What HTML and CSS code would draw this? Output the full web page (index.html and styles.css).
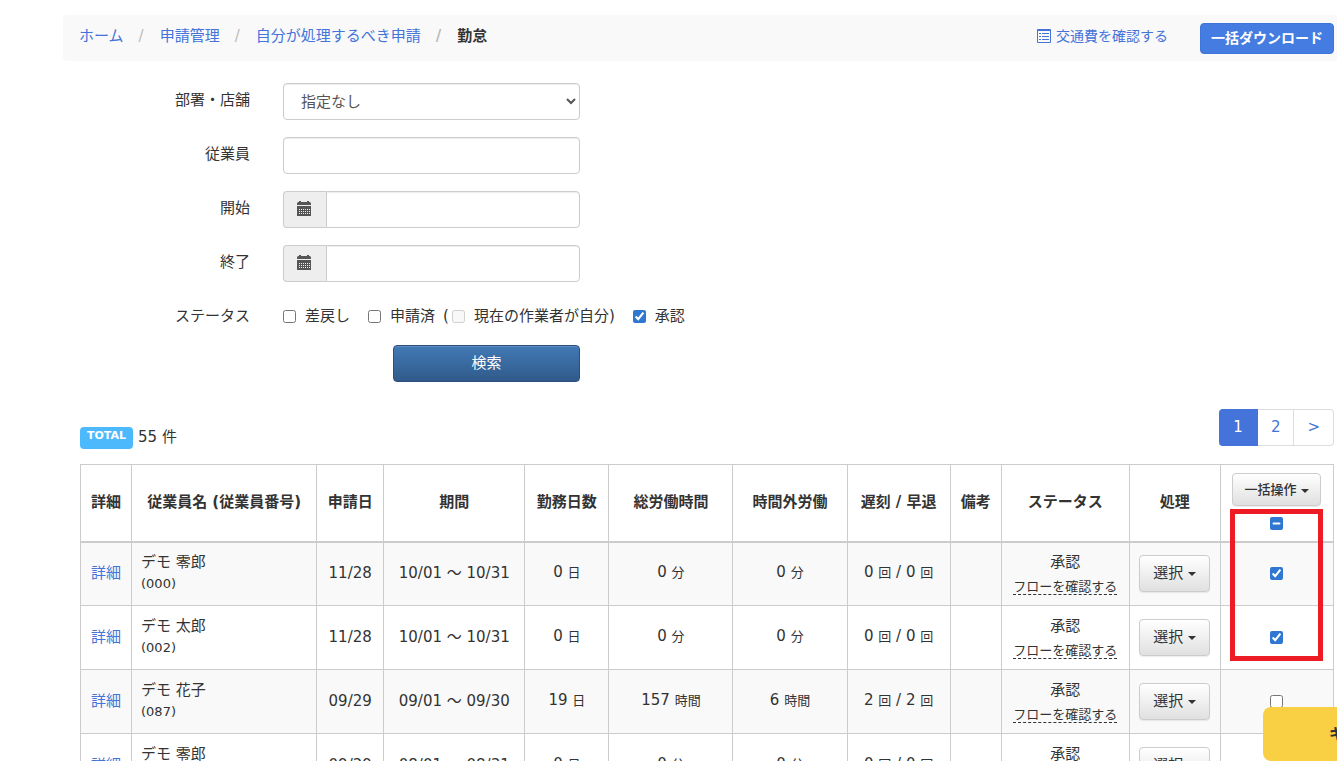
FILE: index.html
```html
<!DOCTYPE html>
<html lang="ja">
<head>
    <meta charset="UTF-8">
    <meta name="viewport" content="width=device-width, initial-scale=1.0">
    <title>勤怠</title>
    <link rel="stylesheet" href="styles.css">
</head>
<body>
    <div class="page">
        <header class="topbar">
            <nav>
                <ol class="breadcrumb">
                    <li><a href="#">ホーム</a></li>
                    <li><a href="#">申請管理</a></li>
                    <li><a href="#">自分が処理するべき申請</a></li>
                    <li class="current">勤怠</li>
                </ol>
            </nav>
            <div class="topbar-actions">
                <a class="expense-link" href="#">
                    <svg width="14" height="14" viewBox="0 0 14 14" fill="none" stroke="currentColor">
                        <path d="M0.5 0.5h13v13h-13z"/>
                        <path d="M0 1.5h14"/>
                        <path d="M2 4.5h2M5 4.5h7M2 7.5h2M5 7.5h7M2 10.5h2M5 10.5h7"/>
                    </svg>
                    交通費を確認する
                </a>
                <button type="button" class="btn-download">一括ダウンロード</button>
            </div>
        </header>

        <main class="content">
            <form id="searchForm">
                <div class="form-row">
                    <label for="section">部署・店舗</label>
                    <select id="section" name="section" class="form-control">
                        <option value="">指定なし</option>
                    </select>
                </div>
                <div class="form-row">
                    <label for="employee">従業員</label>
                    <input type="text" id="employee" name="employee" class="form-control">
                </div>
                <div class="form-row">
                    <label for="start">開始</label>
                    <div class="input-group">
                        <span class="addon">
                            <svg width="14" height="15" viewBox="0 0 14 15">
                                <path fill="#555" d="M0 4V2.5Q0 1 1.5 1H2V0h2v1h6V0h2v1h.5Q14 1 14 2.5V4zM0 5h14v10H0z"/>
                                <path stroke="#eee" stroke-dasharray="1 1" d="M2 8.5h11M2 10.5h11M2 12.5h11"/>
                            </svg>
                        </span>
                        <input type="text" id="start" name="start" class="form-control">
                    </div>
                </div>
                <div class="form-row">
                    <label for="end">終了</label>
                    <div class="input-group">
                        <span class="addon">
                            <svg width="14" height="15" viewBox="0 0 14 15">
                                <path fill="#555" d="M0 4V2.5Q0 1 1.5 1H2V0h2v1h6V0h2v1h.5Q14 1 14 2.5V4zM0 5h14v10H0z"/>
                                <path stroke="#eee" stroke-dasharray="1 1" d="M2 8.5h11M2 10.5h11M2 12.5h11"/>
                            </svg>
                        </span>
                        <input type="text" id="end" name="end" class="form-control">
                    </div>
                </div>
                <div class="form-row status-row">
                    <span class="row-label">ステータス</span>
                    <div class="checks">
                        <label><input type="checkbox" name="returned">差戻し</label>
                        <div class="check-pair">
                            <label><input type="checkbox" name="applied">申請済</label>
                            <span class="paren">(</span><label><input type="checkbox" name="mine" disabled>現在の作業者が自分)</label>
                        </div>
                        <label><input type="checkbox" name="approved" checked>承認</label>
                    </div>
                </div>
                <div class="form-row submit-row">
                    <button type="submit" class="btn-search">検索</button>
                </div>
            </form>

            <div class="list-head">
                <div class="total"><span class="badge">TOTAL</span>55 件</div>
                <nav class="pagination">
                    <a class="active" href="#">1</a>
                    <a href="#">2</a>
                    <a href="#">&gt;</a>
                </nav>
            </div>

            <div class="table-wrap">
                <table>
                    <colgroup>
                        <col class="w-detail">
                        <col class="w-name">
                        <col class="w-date">
                        <col class="w-period">
                        <col class="w-days">
                        <col class="w-total">
                        <col class="w-over">
                        <col class="w-late">
                        <col class="w-note">
                        <col class="w-status">
                        <col class="w-action">
                        <col class="w-bulk">
                    </colgroup>
                    <thead>
                        <tr>
                            <th>詳細</th>
                            <th>従業員名 (従業員番号)</th>
                            <th>申請日</th>
                            <th>期間</th>
                            <th>勤務日数</th>
                            <th>総労働時間</th>
                            <th>時間外労働</th>
                            <th>遅刻 / 早退</th>
                            <th>備考</th>
                            <th>ステータス</th>
                            <th>処理</th>
                            <th class="bulk">
                                <button type="button" class="btn-default btn-small">一括操作<span class="caret"></span></button>
                                <input type="checkbox" id="checkAll" aria-label="すべて選択">
                            </th>
                        </tr>
                    </thead>
                    <tbody>
                        <tr>
                            <td><a href="#">詳細</a></td>
                            <td class="name">デモ 零郎<small>(000)</small></td>
                            <td>11/28</td>
                            <td>10/01 ～ 10/31</td>
                            <td>0 <small>日</small></td>
                            <td>0 <small>分</small></td>
                            <td>0 <small>分</small></td>
                            <td>0 <small>回</small> / 0 <small>回</small></td>
                            <td></td>
                            <td class="status">承認<a href="#">フローを確認する</a></td>
                            <td class="action"><button type="button" class="btn-default">選択<span class="caret"></span></button></td>
                            <td><input type="checkbox" aria-label="デモ 零郎" checked></td>
                        </tr>
                        <tr>
                            <td><a href="#">詳細</a></td>
                            <td class="name">デモ 太郎<small>(002)</small></td>
                            <td>11/28</td>
                            <td>10/01 ～ 10/31</td>
                            <td>0 <small>日</small></td>
                            <td>0 <small>分</small></td>
                            <td>0 <small>分</small></td>
                            <td>0 <small>回</small> / 0 <small>回</small></td>
                            <td></td>
                            <td class="status">承認<a href="#">フローを確認する</a></td>
                            <td class="action"><button type="button" class="btn-default">選択<span class="caret"></span></button></td>
                            <td><input type="checkbox" aria-label="デモ 太郎" checked></td>
                        </tr>
                        <tr>
                            <td><a href="#">詳細</a></td>
                            <td class="name">デモ 花子<small>(087)</small></td>
                            <td>09/29</td>
                            <td>09/01 ～ 09/30</td>
                            <td>19 <small>日</small></td>
                            <td>157 <small>時間</small></td>
                            <td>6 <small>時間</small></td>
                            <td>2 <small>回</small> / 2 <small>回</small></td>
                            <td></td>
                            <td class="status">承認<a href="#">フローを確認する</a></td>
                            <td class="action"><button type="button" class="btn-default">選択<span class="caret"></span></button></td>
                            <td><input type="checkbox" aria-label="デモ 花子"></td>
                        </tr>
                        <tr>
                            <td><a href="#">詳細</a></td>
                            <td class="name">デモ 零郎<small>(000)</small></td>
                            <td>09/29</td>
                            <td>08/01 ～ 08/31</td>
                            <td>0 <small>日</small></td>
                            <td>0 <small>分</small></td>
                            <td>0 <small>分</small></td>
                            <td>0 <small>回</small> / 0 <small>回</small></td>
                            <td></td>
                            <td class="status">承認<a href="#">フローを確認する</a></td>
                            <td class="action"><button type="button" class="btn-default">選択<span class="caret"></span></button></td>
                            <td><input type="checkbox" aria-label="デモ 零郎 8月"></td>
                        </tr>
                    </tbody>
                </table>
                <div class="highlight"></div>
            </div>
        </main>
    </div>

    <button type="button" class="float-button">キ</button>

    <script>
        // Header checkbox is "partly selected" while only some rows are ticked
        const checkAll = document.getElementById('checkAll');
        const rows = document.querySelectorAll('tbody input[type="checkbox"]');

        function updateCheckAll() {
            const count = Array.from(rows).filter(row => row.checked).length;
            checkAll.checked = count === rows.length;
            checkAll.indeterminate = count > 0 && count < rows.length;
        }

        checkAll.addEventListener('change', function() {
            rows.forEach(row => {
                row.checked = checkAll.checked;
            });
        });
        rows.forEach(row => row.addEventListener('change', updateCheckAll));
        updateCheckAll();
    </script>
</body>
</html>
```
FILE: styles.css
```css
* {
    box-sizing: border-box;
}
html {
    overflow: hidden;
}
body {
    margin: 0;
    color: #333;
    background: white;
    font-family: "DejaVu Sans", "Noto Sans CJK JP", sans-serif;
    font-size: 15px;
    line-height: 22px;
}
a {
    color: #4473d9;
    text-decoration: none;
}
button, input, select {
    font-family: inherit;
    font-size: 15px;
}
input[type="checkbox"] {
    width: 13px;
    height: 13px;
    margin: 0;
    accent-color: #2f77d1;
}
.page {
    padding: 15px 0 0 63px;
}
.topbar {
    display: flex;
    justify-content: space-between;
    align-items: flex-start;
    height: 46px;
    padding: 8px 3px 0 16px;
    background: #f9f9f9;
    border-radius: 4px 0 0 4px;
}
.breadcrumb {
    display: flex;
    margin: 0;
    padding: 2px 0 0;
    list-style: none;
}
.breadcrumb li + li::before {
    content: "/";
    padding: 0 16px 0 15px;
    color: #bbb;
}
.current {
    font-weight: bold;
}
.topbar-actions {
    display: flex;
    align-items: flex-start;
    gap: 32px;
}
.expense-link {
    display: flex;
    align-items: center;
    gap: 5px;
    padding-top: 2px;
    font-size: 14px;
}
.btn-download {
    height: 31px;
    padding: 0 10px 3px;
    border: 1px solid #3f74da;
    border-radius: 4px;
    background: #447ce2;
    color: white;
    font-size: 14px;
    font-weight: bold;
}
.content {
    padding: 22px 3px 0 17px;
}
.form-row {
    display: grid;
    grid-template-columns: 170px 297px;
    column-gap: 33px;
    margin-bottom: 17px;
}
.form-row > label, .row-label {
    padding-top: 6px;
    text-align: right;
}
.form-control {
    width: 100%;
    height: 37px;
    padding: 6px 13px;
    border: 1px solid #ccc;
    border-radius: 4px;
    background: white;
    box-shadow: inset 0 1px 1px rgba(0,0,0,0.075);
    color: #555;
}
.input-group {
    display: flex;
}
.addon {
    display: flex;
    flex: 0 0 43px;
    align-items: center;
    justify-content: center;
    padding: 0 2px 2px 0;
    border: 1px solid #ccc;
    border-right: none;
    border-radius: 4px 0 0 4px;
    background: #eee;
}
.input-group .form-control {
    border-radius: 0 4px 4px 0;
}
.status-row {
    grid-template-columns: 170px 1fr;
    margin-bottom: 18px;
}
.checks {
    display: flex;
    gap: 18px;
    padding-top: 6px;
}
.checks label {
    display: flex;
    align-items: center;
    gap: 9px;
}
.check-pair {
    display: flex;
}
.paren {
    padding: 0 3px 0 8px;
}
.submit-row {
    justify-content: start;
    margin-bottom: 27px;
}
.btn-search {
    grid-column: 2;
    justify-self: end;
    width: 187px;
    height: 37px;
    padding: 0 0 5px;
    border: 1px solid #2b4f7c;
    border-radius: 4px;
    background: linear-gradient(#4279b5, #305a8a);
    box-shadow: inset 0 1px 0 rgba(255,255,255,0.15);
    color: white;
}
.list-head {
    display: flex;
    justify-content: space-between;
    align-items: flex-start;
    margin-bottom: 15px;
}
.total {
    display: flex;
    gap: 5px;
    padding-top: 18px;
    line-height: 20px;
}
.badge {
    height: 22px;
    padding: 0 7px;
    border-radius: 4px;
    background: #4db9fd;
    color: white;
    font-size: 11px;
    font-weight: bold;
    line-height: 18px;
}
.pagination {
    display: flex;
}
.pagination a {
    height: 37px;
    padding: 6px 13px;
    border: 1px solid #ddd;
    border-left: none;
}
.pagination a:last-child {
    border-radius: 0 4px 4px 0;
}
.pagination .active {
    padding: 6px 14px;
    border-color: #4473d9;
    border-radius: 4px 0 0 4px;
    background: #4473d9;
    color: white;
}
.table-wrap {
    position: relative;
}
table {
    width: 100%;
    table-layout: fixed;
    border-collapse: collapse;
}
.w-detail, .w-note { width: 51px; }
.w-name { width: 185px; }
.w-date { width: 67px; }
.w-period { width: 141px; }
.w-days { width: 84px; }
.w-total { width: 124px; }
.w-over { width: 114px; }
.w-late { width: 103px; }
.w-status { width: 128px; }
.w-action { width: 91px; }
.w-bulk { width: 113px; }
th, td {
    padding: 0;
    border: 1px solid #ccc;
    text-align: center;
    white-space: nowrap;
}
th {
    height: 77px;
    padding-bottom: 2px;
    border-bottom-width: 2px;
}
td {
    height: 64px;
    padding-bottom: 2px;
}
tbody tr:nth-child(odd) {
    background: #f9f9f9;
}
small {
    font-size: 13px;
}
.name {
    padding-left: 9px;
    text-align: left;
}
.name small {
    display: block;
}
.status a {
    display: table;
    margin: 6px auto 0;
    border-bottom: 1px dashed #333;
    color: #333;
    font-size: 13px;
    line-height: 15px;
}
.action {
    padding-bottom: 0;
}
.btn-default {
    height: 37px;
    padding: 0 13px 4px;
    border: 1px solid #ccc;
    border-radius: 4px;
    background: linear-gradient(#fff, #e0e0e0);
    box-shadow: 0 1px 1px rgba(0,0,0,0.075);
    color: #333;
    vertical-align: middle;
}
.btn-small {
    height: 33px;
    padding: 0 11px 2px;
    font-size: 13px;
    font-weight: 500;
}
.bulk .btn-small {
    display: block;
    margin: 0 auto 11px;
}
.bulk input {
    display: block;
    margin: 0 auto;
}
td input {
    vertical-align: middle;
}
.caret {
    display: inline-block;
    margin-left: 5px;
    border: 4px solid transparent;
    border-top-color: #333;
    border-bottom: none;
    vertical-align: middle;
}
.highlight {
    position: absolute;
    top: 45px;
    right: 11px;
    width: 93px;
    height: 152px;
    border: 5px solid #ed1c24;
    pointer-events: none;
}
.float-button {
    position: fixed;
    right: -70px;
    bottom: 0;
    width: 144px;
    height: 54px;
    padding: 0 0 4px 66px;
    border: none;
    border-radius: 8px;
    background: #f9d043;
    color: #333;
    font-weight: bold;
    text-align: left;
}
```
